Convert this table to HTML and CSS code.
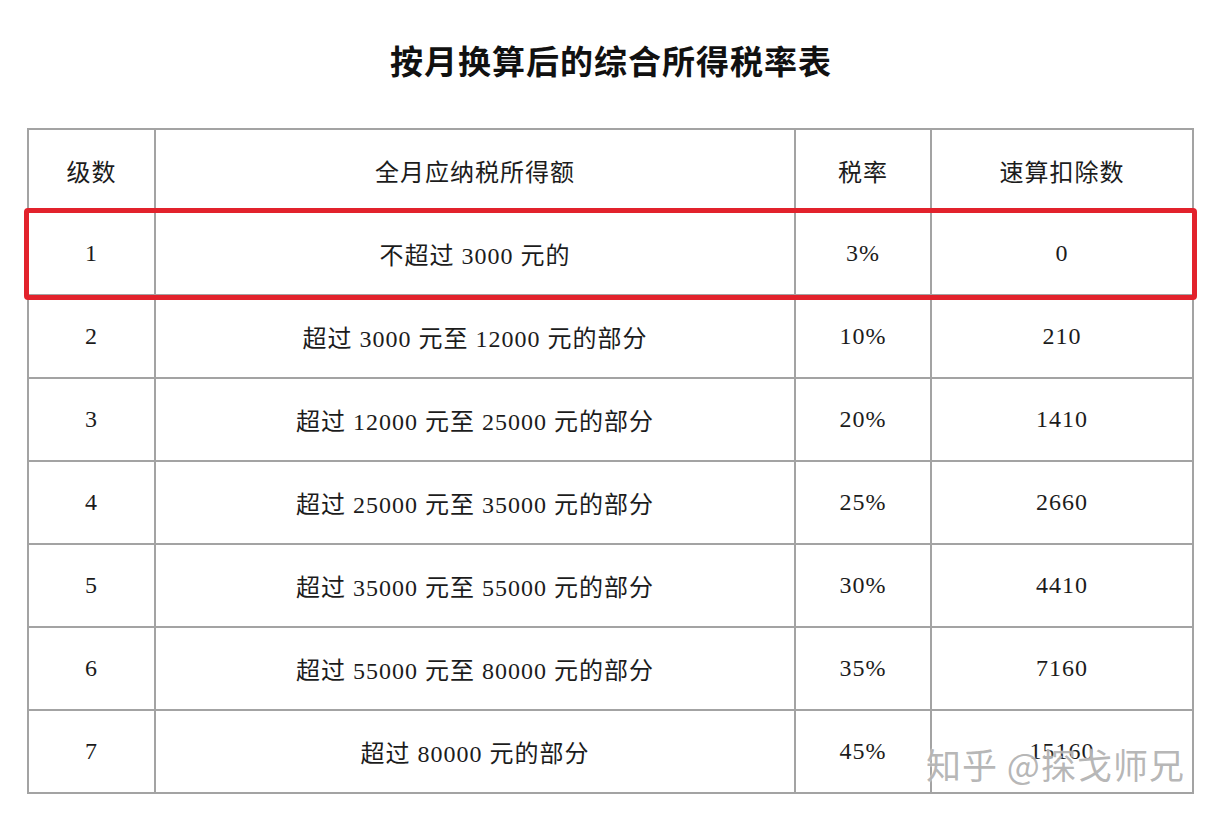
FILE: index.html
```html
<!DOCTYPE html>
<html lang="zh-CN">
<head>
<meta charset="utf-8">
<title>按月换算后的综合所得税率表</title>
<link rel="stylesheet" href="styles.css">
</head>
<body>
<div class="page">
  <h1 class="title">按月换算后的综合所得税率表</h1>
  <div class="table-wrap">
    <table class="rate-table">
      <colgroup>
        <col class="c1"><col class="c2"><col class="c3"><col class="c4">
      </colgroup>
      <thead>
        <tr><th>级数</th><th>全月应纳税所得额</th><th>税率</th><th>速算扣除数</th></tr>
      </thead>
      <tbody>
        <tr><td>1</td><td>不超过 3000 元的</td><td>3%</td><td>0</td></tr>
        <tr><td>2</td><td>超过 3000 元至 12000 元的部分</td><td>10%</td><td>210</td></tr>
        <tr><td>3</td><td>超过 12000 元至 25000 元的部分</td><td>20%</td><td>1410</td></tr>
        <tr><td>4</td><td>超过 25000 元至 35000 元的部分</td><td>25%</td><td>2660</td></tr>
        <tr><td>5</td><td>超过 35000 元至 55000 元的部分</td><td>30%</td><td>4410</td></tr>
        <tr><td>6</td><td>超过 55000 元至 80000 元的部分</td><td>35%</td><td>7160</td></tr>
        <tr><td>7</td><td>超过 80000 元的部分</td><td>45%</td><td>15160</td></tr>
      </tbody>
    </table>
    <div class="highlight"></div>
    <div class="watermark">知乎 @探戈师兄</div>
  </div>
</div>
</body>
</html>
```

FILE: styles.css
```css
html, body {
  margin: 0;
  padding: 0;
  background: #ffffff;
}

.page {
  width: 1220px;
  height: 816px;
  font-family: "Liberation Serif", "Noto Sans CJK SC", serif;
  color: #1a1a1a;
}

.title {
  margin: 0;
  padding-top: 38px;
  height: 128px;
  box-sizing: border-box;
  text-align: center;
  font-family: "Noto Sans CJK SC", sans-serif;
  font-size: 33px;
  line-height: 44px;
  font-weight: 700;
  letter-spacing: 1px;
  color: #111;
  padding-left: 2px;
}

.table-wrap {
  position: relative;
  margin-left: 27px;
  width: 1165px;
}

.rate-table {
  width: 1165px;
  border-collapse: collapse;
  table-layout: fixed;
}

.c1 { width: 127px; }
.c2 { width: 640px; }
.c3 { width: 136px; }
.c4 { width: 262px; }

.rate-table th,
.rate-table td {
  border: 2px solid #a3a3a3;
  height: 81px;
  padding: 0;
  text-align: center;
  vertical-align: middle;
  font-size: 24px;
  font-weight: 400;
  letter-spacing: 1px;
  color: #1c1c1c;
}

.highlight {
  position: absolute;
  left: -3px;
  top: 80px;
  width: 1173px;
  height: 92px;
  box-sizing: border-box;
  border: 5px solid #e2222c;
  border-radius: 4px;
}

.watermark {
  position: absolute;
  left: 899px;
  top: 614px;
  font-family: "Noto Sans CJK SC", sans-serif;
  font-size: 35px;
  line-height: 44px;
  letter-spacing: 1px;
  color: rgba(170, 170, 170, 0.85);
  text-shadow: 0 0 2px #fff;
  white-space: nowrap;
}
```
